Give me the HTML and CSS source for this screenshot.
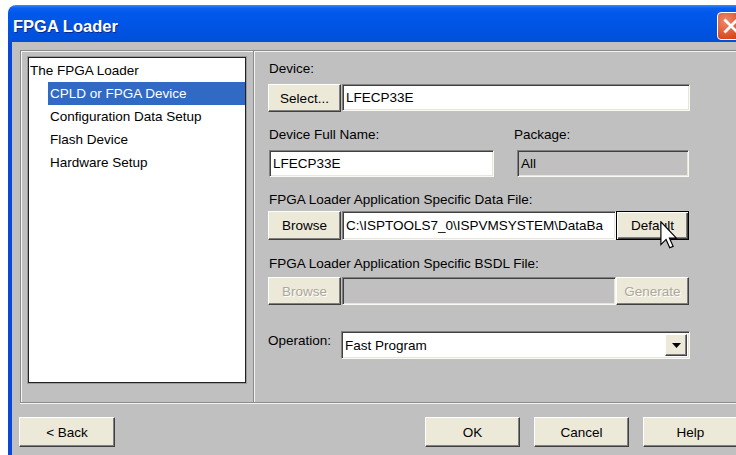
FILE: index.html
```html
<!DOCTYPE html>
<html lang="en">
<head>
<meta charset="utf-8">
<title>FPGA Loader</title>
<link rel="stylesheet" href="styles.css">
</head>
<body>
<div class="window">
  <div class="titlebar">
    <span class="title">FPGA Loader</span>
    <span class="close">
      <svg width="28" height="28" viewBox="0 0 28 28"><path d="M8 8 L20 20 M20 8 L8 20" stroke="#fff" stroke-width="3" stroke-linecap="square"/></svg>
    </span>
  </div>
  <div class="client">
    <div class="frame">
      <div class="nav">
        <ul class="tree">
          <li class="root">The FPGA Loader</li>
          <li class="child selected"><span>CPLD or FPGA Device</span></li>
          <li class="child"><span>Configuration Data Setup</span></li>
          <li class="child"><span>Flash Device</span></li>
          <li class="child"><span>Hardware Setup</span></li>
        </ul>
      </div>
      <div class="page">
        <div class="label lbl-device">Device:</div>
        <div class="row row-device">
          <button class="btn w72">Select...</button>
          <div class="field f-device">LFECP33E</div>
        </div>
        <div class="row row-labels">
          <span class="label w245">Device Full Name:</span>
          <span class="label">Package:</span>
        </div>
        <div class="row row-names">
          <div class="field f-full">LFECP33E</div>
          <div class="field disabled f-pkg">All</div>
        </div>
        <div class="label lbl-data">FPGA Loader Application Specific Data File:</div>
        <div class="row row-data">
          <button class="btn w72">Browse</button>
          <div class="field f-path">C:\ISPTOOLS7_0\ISPVMSYSTEM\DataBa</div>
          <button class="btn default w73">Default</button>
          <svg class="cursor" width="18" height="28" viewBox="0 0 12 19">
            <path d="M0.5 0.5 L0.5 16 L4 12.5 L6.5 18.2 L8.8 17.2 L6.3 11.6 L11 11.6 Z" fill="#fff" stroke="#000" stroke-width="0.8" stroke-linejoin="miter"/>
          </svg>
        </div>
        <div class="label lbl-bsdl">FPGA Loader Application Specific BSDL File:</div>
        <div class="row row-bsdl">
          <button class="btn w72" disabled>Browse</button>
          <div class="field disabled f-path"></div>
          <button class="btn w73" disabled>Generate</button>
        </div>
        <div class="row row-op">
          <span class="label op-label">Operation:</span>
          <div class="field combo">
            <span class="combo-text">Fast Program</span>
            <span class="combo-btn">
              <svg width="9" height="5" viewBox="0 0 9 5"><path d="M0 0 H9 L4.5 5 Z" fill="#000"/></svg>
            </span>
          </div>
        </div>
      </div>
    </div>
    <div class="footer">
      <button class="btn fbtn back">&lt; Back</button>
      <button class="btn fbtn ok">OK</button>
      <button class="btn fbtn">Cancel</button>
      <button class="btn fbtn">Help</button>
    </div>
  </div>
</div>
</body>
</html>
```

FILE: styles.css
```css
html, body {
  margin: 0;
  padding: 0;
  width: 736px;
  height: 455px;
  overflow: hidden;
  background: #fff;
  font-family: "Liberation Sans", Arial, sans-serif;
  font-size: 13.5px;
  color: #000;
}

.window {
  margin: 5px 0 0 8px;
  width: 740px;
  height: 450px;
  display: flex;
  flex-direction: column;
}

/* caption bar */
.titlebar {
  height: 37px;
  flex: none;
  border-radius: 8px 8px 0 0;
  background: linear-gradient(#3a8cff 0px, #0a5ff0 3px, #0058ea 8px, #0054e3 60%, #004fd8 100%);
  display: flex;
  align-items: flex-start;
  box-sizing: border-box;
}

.title {
  color: #fff;
  font-weight: bold;
  font-size: 16.5px;
  padding: 12px 0 0 5px;
  line-height: 18px;
  text-shadow: 1px 1px 0 #0a2a8a;
}

.close {
  margin: 7px 3px 0 auto;
  width: 28px;
  height: 28px;
  box-sizing: border-box;
  border: 1px solid #fff;
  border-radius: 4px;
  background: radial-gradient(circle at 30% 30%, #f0896a, #d9481f 70%, #c23a14);
  display: flex;
  align-items: center;
  justify-content: center;
}
.close svg { display: block; }

/* dialog body */
.client {
  flex: 1;
  background: #c0c0c0;
  border-left: 4px solid #0848d8;
  display: flex;
  flex-direction: column;
}

.frame {
  margin: 8px 0 0 8px;
  height: 353px;
  box-sizing: border-box;
  border-top: 1px solid #8a8a8a;
  border-left: 1px solid #8a8a8a;
  border-bottom: 1px solid #8a8a8a;
  box-shadow: inset 1px 1px 0 #f4f4f4, 0 1px 0 #f4f4f4;
  display: flex;
}

.nav {
  width: 233px;
  flex: none;
  box-sizing: border-box;
  padding: 6px 0 0 7px;
  border-right: 1px solid #8a8a8a;
  box-shadow: 1px 0 0 #f4f4f4;
}

.tree {
  list-style: none;
  margin: 0;
  padding: 1px 0 0 0;
  width: 218px;
  height: 326px;
  box-sizing: border-box;
  background: #fff;
  border: 1px solid #222;
  box-shadow: 0 0 0 1px #9a9a9a;
}

.tree li {
  height: 23px;
  line-height: 23px;
  white-space: nowrap;
}
.tree .root { padding-left: 1px; }
.tree .child { padding-left: 19px; }
.tree .child span { display: block; padding-left: 2px; }
.tree .selected span { background: #316ac5; color: #fff; }

/* right-hand page */
.page {
  flex: 1;
  padding-left: 14px;
  display: flex;
  flex-direction: column;
  position: relative;
}

.label { line-height: 16px; white-space: nowrap; }
.lbl-device, .lbl-data, .lbl-bsdl { padding-left: 1px; }
.lbl-device { margin-top: 10px; }
.lbl-data { margin-top: 15px; }
.lbl-bsdl { margin-top: 16px; }

.row {
  display: flex;
  width: 422px;
  position: relative;
}
.row-device { margin-top: 7px; height: 28px; }
.row-labels { margin-top: 15px; padding-left: 1px; }
.row-names { margin-top: 7px; height: 27px; padding-left: 1px; }
.row-data { margin-top: 3px; height: 29px; }
.row-bsdl { margin-top: 5px; height: 28px; }
.row-op { margin-top: 26px; height: 28px; }

.w245 { width: 245px; }
.w72 { width: 73px; }
.w73 { width: 73px; margin-left: 3px; }

.btn {
  font: inherit;
  color: #000;
  background: #ece9d8;
  border: 1px solid;
  border-color: #fff #404040 #404040 #fff;
  box-shadow: inset -1px -1px 0 #808080;
  padding: 0;
  margin: 0;
  height: 100%;
  flex: none;
  box-sizing: border-box;
}
.btn.default {
  border: 1px solid #000;
  box-shadow: inset 1px 1px 0 #fff, inset -1px -1px 0 #404040, inset -2px -2px 0 #808080;
}
.btn:disabled {
  color: #aca899;
  text-shadow: 1px 1px 0 #fff;
}

.field {
  box-sizing: border-box;
  height: 100%;
  background: #fff;
  border: 1px solid;
  border-color: #808080 #fafaf5 #fafaf5 #808080;
  box-shadow: inset 1px 1px 0 #404040, inset -1px -1px 0 #e8e6da;
  padding: 0 3px;
  display: flex;
  align-items: center;
  white-space: nowrap;
  overflow: hidden;
}
.field.disabled { background: #c0c0c0; }

.f-device { width: 349px; margin-left: 1px; height: 27px; }
.f-full { width: 225px; }
.f-pkg { width: 172px; margin-left: 23px; }
.f-path { width: 274px; margin-left: 1px; }

.cursor {
  position: absolute;
  left: 392px;
  top: 10px;
}

.op-label { width: 73px; padding-top: 2px; }
.combo {
  width: 349px;
  padding-right: 2px;
}
.combo-text { flex: 1; }
.combo-btn {
  width: 22px;
  height: 22px;
  box-sizing: border-box;
  background: #ece9d8;
  border: 1px solid;
  border-color: #fff #404040 #404040 #fff;
  box-shadow: inset -1px -1px 0 #808080;
  display: flex;
  align-items: center;
  justify-content: center;
}
.combo-btn svg { display: block; }

/* bottom button strip */
.footer {
  display: flex;
  padding: 14px 10px 0 7px;
}
.fbtn {
  width: 95px;
  height: 30px;
}
.fbtn.back { width: 96px; }
.fbtn + .fbtn { margin-left: 14px; }
.fbtn.ok { margin-left: auto; }
```
